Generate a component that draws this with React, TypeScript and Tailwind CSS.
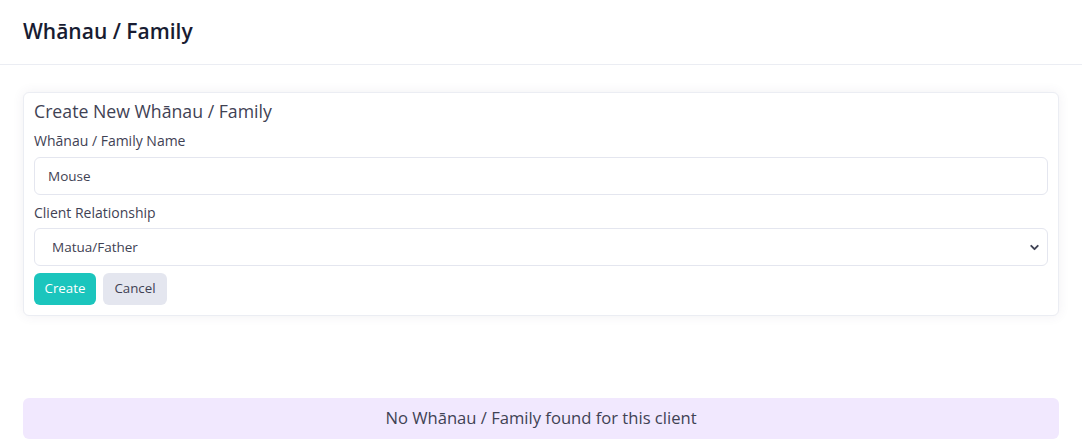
import React from 'react';
import { ChevronDown } from 'lucide-react';

export default function App() {
  return (
    <div className="min-h-[441px] bg-white text-[#3f4254] font-['Open_Sans',sans-serif]">
      {/* Page header */}
      <div className="h-[65px] border-b border-[#ebedf3] px-[23px] flex items-center">
        <h1 className="text-[21px] font-semibold text-[#181c32]">Whānau / Family</h1>
      </div>

      <div className="px-[23px] pt-[27px]">
        {/* Create form card */}
        <div className="rounded-[6px] border border-[#ebedf3] bg-white shadow-[0_0_12px_rgba(82,63,105,0.08)] px-[10px] pt-[6px] pb-[10px]">
          <h5 className="text-[17.7px] font-medium text-[#3f4254] leading-[24px]">Create New Whānau / Family</h5>

          <label className="block mt-[8px] text-[14px] leading-[20px]">Whānau / Family Name</label>
          <div className="mt-[6px] h-[38px] rounded-[6px] border border-[#e4e6ef] flex items-center px-[13px] text-[13.5px]">
            Mouse
          </div>

          <label className="block mt-[8px] text-[14px] leading-[20px]">Client Relationship</label>
          <div className="mt-[5px] h-[38px] rounded-[6px] border border-[#e4e6ef] flex items-center justify-between pl-[17px] pr-[6px] text-[13.5px]">
            <span>Matua/Father</span>
            <ChevronDown className="w-[13px] h-[13px] text-[#3f4254]" strokeWidth={3.5} />
          </div>

          <div className="mt-[7px] flex gap-[7px]">
            <button className="h-[32px] w-[62px] rounded-[6px] bg-[#1bc5bd] text-white text-[13.3px]">Create</button>
            <button className="h-[32px] w-[64px] rounded-[6px] bg-[#e4e6ef] text-[#3f4254] text-[13.3px]">Cancel</button>
          </div>
        </div>

        {/* Empty state */}
        <div className="mt-[82px] h-[41px] rounded-[6px] bg-[#f1e8fe] flex items-center justify-center text-[16.6px] text-[#3f4254]">
          No Whānau / Family found for this client
        </div>
      </div>
    </div>
  );
}
